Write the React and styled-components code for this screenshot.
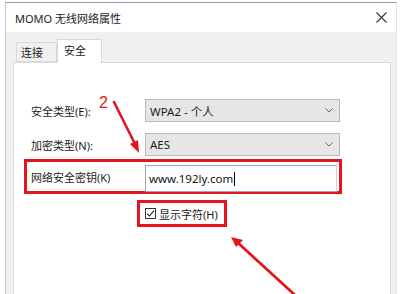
import React from "react";
import styled, { createGlobalStyle } from "styled-components";

const RED = "#e3161d";

const GlobalStyle = createGlobalStyle`
  html, body {
    margin: 0;
    padding: 0;
    background: #ffffff;
  }
  body {
    font-family: "Noto Sans", "Noto Sans CJK SC", sans-serif;
    font-size: 11px;
    color: #1b1b1b;
  }
`;

const App = () => {
  return (
    <>
      <GlobalStyle />
      <Page>
        <Window>
          <TitleBar>
            <Title>MOMO 无线网络属性</Title>
            <CloseButton>
              <svg width="11" height="11" viewBox="0 0 11 11">
                <path d="M0.5 0.5 L10.5 10.5 M10.5 0.5 L0.5 10.5" stroke="#333" strokeWidth="1.1" fill="none" />
              </svg>
            </CloseButton>
          </TitleBar>
          <Body>
            <Tabs>
              <Tab>连接</Tab>
              <Tab $active>安全</Tab>
            </Tabs>
            <Panel>
              <FieldRow>
                <Label>安全类型(E):</Label>
                <Select>
                  <span>WPA2 - 个人</span>
                  <Chevron />
                </Select>
              </FieldRow>
              <FieldRow $gap>
                <Label>加密类型(N):</Label>
                <Select>
                  <span>AES</span>
                  <Chevron />
                </Select>
              </FieldRow>
              <KeyBox>
                <Label>网络安全密钥(K)</Label>
                <KeyInput>
                  www.192ly.com<Caret />
                </KeyInput>
              </KeyBox>
              <CheckBox>
                <Box>
                  <svg width="9" height="9" viewBox="0 0 9 9">
                    <path d="M1 4.6 L3.4 7 L8 1.6" stroke="#222" strokeWidth="1.1" fill="none" />
                  </svg>
                </Box>
                <CheckLabel>显示字符(H)</CheckLabel>
              </CheckBox>
            </Panel>
          </Body>
        </Window>
        <Annotations width="400" height="294" viewBox="0 0 400 294">
          <text x="99" y="108" fill={RED} fontSize="16" fontFamily="Liberation Sans, sans-serif">2</text>
          <line x1="114" y1="102" x2="135" y2="144" stroke={RED} strokeWidth="2.6" strokeLinecap="round" />
          <path d="M139 153 L130 144 L138 140 Z" fill={RED} />
          <line x1="296" y1="296" x2="237" y2="242" stroke={RED} strokeWidth="2.8" strokeLinecap="round" />
          <path d="M231 237 L243 240 L236 247 Z" fill={RED} />
        </Annotations>
      </Page>
    </>
  );
};

const Chevron = () => (
  <svg width="8" height="5" viewBox="0 0 8 5">
    <path d="M0.5 0.5 L4 4 L7.5 0.5" stroke="#666" strokeWidth="1" fill="none" />
  </svg>
);

const Page = styled.div`
  position: relative;
  width: 400px;
  height: 294px;
  overflow: hidden;
  padding-top: 2px;
  box-sizing: border-box;
`;

const Window = styled.div`
  margin-left: 5px;
  width: 392px;
  height: 300px;
  box-sizing: border-box;
  border-top: 1px solid #8a9fb1;
  border-left: 1px solid #c3ccd4;
  border-right: 1px solid #dde2e6;
  display: flex;
  flex-direction: column;
`;

const TitleBar = styled.div`
  height: 29px;
  background: #ffffff;
  display: flex;
  align-items: center;
  justify-content: space-between;
  padding: 0 9px;
`;

const Title = styled.div`
  font-size: 11px;
  color: #222;
  margin-top: 1px;
`;

const CloseButton = styled.div`
  display: flex;
  align-items: center;
  margin-top: -1px;
`;

const Body = styled.div`
  flex: 1;
  background: #f0f0f0;
  padding: 7px 5px 0 7px;
  display: flex;
  flex-direction: column;
`;

const Tabs = styled.div`
  display: flex;
  align-items: flex-end;
  padding-left: 3px;
`;

const Tab = styled.div`
  position: relative;
  z-index: ${p => (p.$active ? 1 : 0)};
  height: ${p => (p.$active ? 24 : 20)}px;
  box-sizing: border-box;
  padding: 0 ${p => (p.$active ? 15 : 13)}px 0 ${p => (p.$active ? 6 : 4)}px;
  display: flex;
  align-items: center;
  background: ${p => (p.$active ? "#ffffff" : "#f0f0f0")};
  border: 1px solid #d9d9d9;
  border-bottom: ${p => (p.$active ? "none" : "1px solid #d9d9d9")};
  margin-bottom: ${p => (p.$active ? -1 : 0)}px;
  padding-bottom: ${p => (p.$active ? 3 : 0)}px;
  color: #1b1b1b;
`;

const Panel = styled.div`
  flex: 1;
  background: #ffffff;
  border: 1px solid #d9d9d9;
  padding: 36px 0 0 10px;
`;

const FieldRow = styled.div`
  display: flex;
  align-items: center;
  height: 23px;
  padding-left: 7px;
  margin-top: ${p => (p.$gap ? 11 : 0)}px;
`;

const Label = styled.div`
  width: 114px;
  flex-shrink: 0;
`;

const Select = styled.div`
  width: 195px;
  height: 23px;
  box-sizing: border-box;
  background: #e6e6e6;
  border: 1px solid #b9b9b9;
  display: flex;
  align-items: center;
  justify-content: space-between;
  padding: 0 6px 0 4px;
  font-size: 11.5px;
`;

const KeyBox = styled.div`
  margin-top: 3px;
  width: 318px;
  height: 35px;
  box-sizing: border-box;
  border: 3px solid ${RED};
  display: flex;
  align-items: center;
  padding-left: 4px;
`;

const KeyInput = styled.div`
  align-self: flex-end;
  width: 192px;
  height: 27px;
  box-sizing: border-box;
  border: 1px solid #8ea6c0;
  border-right-color: #c9d3de;
  background: #ffffff;
  display: flex;
  align-items: center;
  padding-left: 3px;
  margin-bottom: -1px;
  font-size: 11.5px;
  color: #111;
`;

const Caret = styled.span`
  display: inline-block;
  width: 1px;
  height: 14px;
  background: #000;
  margin-left: 1px;
`;

const CheckBox = styled.div`
  margin: 6px 0 0 113px;
  width: 90px;
  height: 27px;
  box-sizing: border-box;
  border: 3px solid ${RED};
  display: flex;
  align-items: center;
  padding-left: 5px;
`;

const Box = styled.div`
  width: 11px;
  height: 11px;
  box-sizing: border-box;
  border: 1px solid #333;
  background: #fff;
  display: flex;
  align-items: center;
  justify-content: center;
`;

const CheckLabel = styled.span`
  margin-left: 3px;
`;

const Annotations = styled.svg`
  position: absolute;
  left: 0;
  top: 0;
  pointer-events: none;
`;

export default App;
